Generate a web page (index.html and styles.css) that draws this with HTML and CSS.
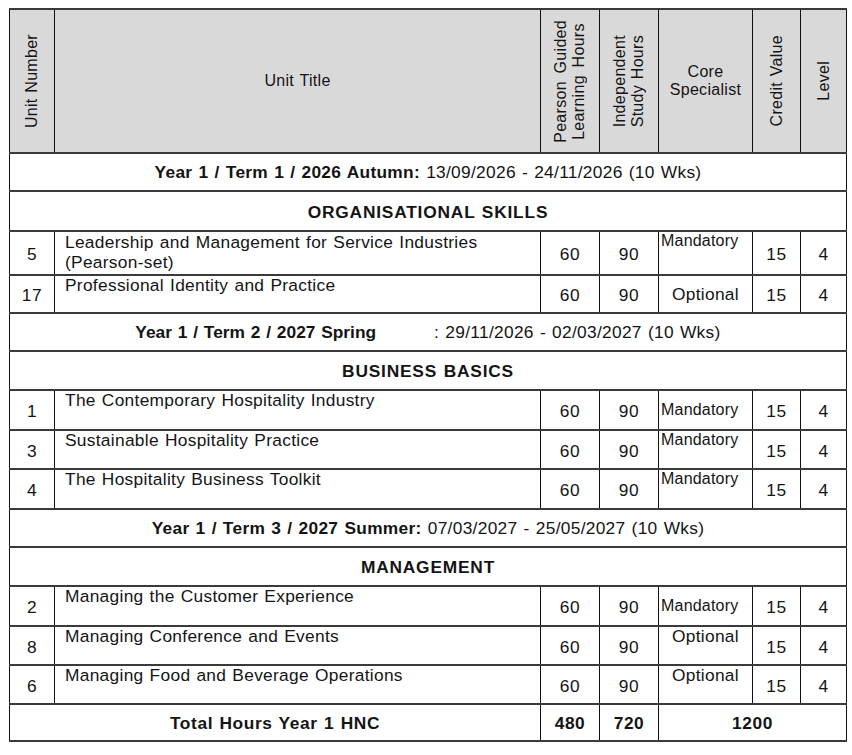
FILE: index.html
```html
<!DOCTYPE html>
<html lang="en">
<head>
<meta charset="utf-8">
<title>HNC Year 1 Units</title>
<link rel="stylesheet" href="styles.css">
</head>
<body>
<table class="plan">
  <colgroup>
    <col class="c-num"><col class="c-title"><col class="c-hrs"><col class="c-hrs"><col class="c-core"><col class="c-cred"><col class="c-lvl">
  </colgroup>
  <thead>
    <tr class="head">
      <th><div class="vert">Unit Number</div></th>
      <th class="h-title">Unit Title</th>
      <th><div class="vert wide">Pearson Guided<br>Learning Hours</div></th>
      <th><div class="vert">Independent<br>Study Hours</div></th>
      <th class="h-core">Core<br>Specialist</th>
      <th><div class="vert">Credit Value</div></th>
      <th><div class="vert">Level</div></th>
    </tr>
  </thead>
  <tbody>
    <tr class="term"><td colspan="7"><b>Year 1 / Term 1 / 2026 Autumn:</b> 13/09/2026 - 24/11/2026 (10 Wks)</td></tr>
    <tr class="section first"><td colspan="7">ORGANISATIONAL SKILLS</td></tr>
    <tr class="unit tall">
      <td class="num">5</td><td class="title two">Leadership and Management for Service Industries<br>(Pearson-set)</td>
      <td class="num">60</td><td class="num">90</td><td class="core top left">Mandatory</td><td class="num">15</td><td class="num">4</td>
    </tr>
    <tr class="unit short">
      <td class="num">17</td><td class="title">Professional Identity and Practice</td>
      <td class="num">60</td><td class="num">90</td><td class="core">Optional</td><td class="num">15</td><td class="num">4</td>
    </tr>
    <tr class="term"><td colspan="7"><b class="narrow">Year 1 / Term 2 / 2027 Spring</b><span class="tab"></span>: 29/11/2026 - 02/03/2027 (10 Wks)</td></tr>
    <tr class="section"><td colspan="7">BUSINESS BASICS</td></tr>
    <tr class="unit big">
      <td class="num">1</td><td class="title">The Contemporary Hospitality Industry</td>
      <td class="num">60</td><td class="num">90</td><td class="core left">Mandatory</td><td class="num">15</td><td class="num">4</td>
    </tr>
    <tr class="unit">
      <td class="num">3</td><td class="title">Sustainable Hospitality Practice</td>
      <td class="num">60</td><td class="num">90</td><td class="core top left">Mandatory</td><td class="num">15</td><td class="num">4</td>
    </tr>
    <tr class="unit big">
      <td class="num">4</td><td class="title">The Hospitality Business Toolkit</td>
      <td class="num">60</td><td class="num">90</td><td class="core top left">Mandatory</td><td class="num">15</td><td class="num">4</td>
    </tr>
    <tr class="term"><td colspan="7"><b>Year 1 / Term 3 / 2027 Summer:</b> 07/03/2027 - 25/05/2027 (10 Wks)</td></tr>
    <tr class="section"><td colspan="7">MANAGEMENT</td></tr>
    <tr class="unit big">
      <td class="num">2</td><td class="title">Managing the Customer Experience</td>
      <td class="num">60</td><td class="num">90</td><td class="core left">Mandatory</td><td class="num">15</td><td class="num">4</td>
    </tr>
    <tr class="unit">
      <td class="num">8</td><td class="title">Managing Conference and Events</td>
      <td class="num">60</td><td class="num">90</td><td class="core top">Optional</td><td class="num">15</td><td class="num">4</td>
    </tr>
    <tr class="unit">
      <td class="num">6</td><td class="title">Managing Food and Beverage Operations</td>
      <td class="num">60</td><td class="num">90</td><td class="core top">Optional</td><td class="num">15</td><td class="num">4</td>
    </tr>
    <tr class="total">
      <td colspan="2">Total Hours Year 1 HNC</td><td>480</td><td>720</td><td colspan="3">1200</td>
    </tr>
  </tbody>
</table>
</body>
</html>
```
FILE: styles.css
```css
html, body {
  background: #ffffff;
}
body {
  margin: 8px 0 0 9px;
  font-family: "Liberation Sans", Arial, sans-serif;
  color: #141414;
}
.plan {
  border-collapse: collapse;
  table-layout: fixed;
  width: 837px;
  font-size: 17.33px;
  line-height: 18px;
  letter-spacing: 0.3px;
  word-spacing: 1px;
}
.c-num { width: 45px; }
.c-title { width: 486px; }
.c-hrs { width: 59px; }
.c-core { width: 94px; }
.c-cred { width: 48px; }
.c-lvl { width: 46px; }

.plan th, .plan td {
  border-left: 1px solid #111;
  border-right: 1px solid #111;
  border-top: 2px solid #3a3a3a;
  border-bottom: 2px solid #3a3a3a;
  padding: 0;
}
.head th {
  background: #d9d9d9;
  height: 142px;
  font-weight: normal;
  font-size: 16px;
  line-height: 18px;
  letter-spacing: 0.3px;
  text-align: center;
  vertical-align: middle;
}
.vert {
  writing-mode: vertical-rl;
  transform: rotate(180deg);
  margin: 0 auto;
  text-align: center;
  white-space: nowrap;
}
.vert.wide {
  word-spacing: 3px;
}
.h-core {
  line-height: 19px;
}
.term td {
  height: 36px;
  text-align: center;
  vertical-align: middle;
}
.narrow {
  letter-spacing: 0;
}
.tab {
  display: inline-block;
  width: 58px;
}
.section td {
  height: 36px;
  text-align: center;
  vertical-align: middle;
  font-weight: bold;
  letter-spacing: 0.8px;
  padding-top: 1px;
}
.section.first td { height: 37px; }
.unit td {
  height: 35px;
}
.unit.big td { height: 36px; }
.unit.tall td { height: 40px; }
.unit.short td { height: 34px; }
.num {
  text-align: center;
  vertical-align: middle;
  padding-top: 2px !important;
  letter-spacing: 0.6px;
}
.title {
  vertical-align: top;
  text-align: left;
  padding: 0 6px 0 10px !important;
}
.title.two {
  line-height: 20px;
}
.core {
  text-align: center;
  vertical-align: middle;
}
.core.top {
  vertical-align: top;
  padding-top: 0 !important;
}
.core.left {
  text-align: left;
  font-size: 16px;
  letter-spacing: 0.2px;
  padding-left: 2px !important;
}
.total td {
  height: 35px;
  text-align: center;
  vertical-align: middle;
  font-weight: bold;
  letter-spacing: 0.6px;
}
```
